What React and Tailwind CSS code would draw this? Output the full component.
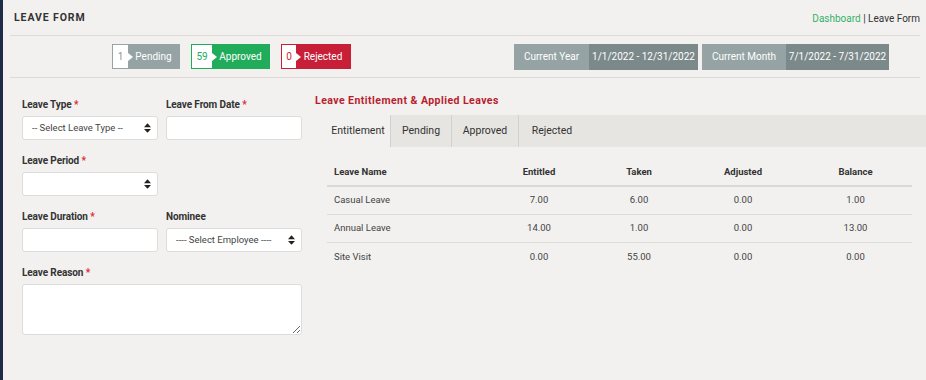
const STATUS = [
  { n: '1', label: 'Pending', bg: 'bg-[#96a3a5]', border: 'border-[#96a3a5]', num: 'text-[#8a9597]', w: 'w-[68px]', box: 'w-[15px]', tip: 15 },
  { n: '59', label: 'Approved', bg: 'bg-[#21ac5b]', border: 'border-[#21ac5b]', num: 'text-[#21ac5b]', w: 'w-[79px]', box: 'w-[20px]', tip: 20 },
  { n: '0', label: 'Rejected', bg: 'bg-[#c81f38]', border: 'border-[#c81f38]', num: 'text-[#c81f38]', w: 'w-[70px]', box: 'w-[14px]', tip: 14 },
]

const ROWS = [
  ['Casual Leave', '7.00', '6.00', '0.00', '1.00'],
  ['Annual Leave', '14.00', '1.00', '0.00', '13.00'],
  ['Site Visit', '0.00', '55.00', '0.00', '0.00'],
]

const COLS = 'grid grid-cols-[160px_104px_96px_112px_113px]'

function Arrows() {
  return (
    <svg width="7" height="10" viewBox="0 0 8 11" className="shrink-0">
      <path d="M4 0 L8 4.5 L0 4.5 Z M0 6.5 L8 6.5 L4 11 Z" fill="#222" />
    </svg>
  )
}

function Label({ children, req }) {
  return (
    <div className="text-[10px] font-bold text-[#333] leading-[14px] mb-[4px] tracking-[-0.1px]">
      {children}
      {req && <span className="text-[#e0262f]"> *</span>}
    </div>
  )
}

function Input() {
  return <div className="h-[24px] bg-white border border-[#dcdcdc] rounded-[3px]" />
}

function Select({ text }) {
  return (
    <div className="h-[24px] bg-white border border-[#dcdcdc] rounded-[3px] flex items-center justify-between pl-[9px] pr-[6px]">
      <span className="text-[9.5px] text-[#444] whitespace-nowrap">{text}</span>
      <Arrows />
    </div>
  )
}

function Badge({ s }) {
  return (
    <div className={`relative flex h-[25px] ${s.w} ${s.bg} border ${s.border}`}>
      <div className={`${s.box} bg-white flex items-center justify-center text-[10px] ${s.num}`}>{s.n}</div>
      <div
        className="absolute top-[8px] w-0 h-0 border-y-[4px] border-y-transparent border-l-[5px] border-l-white"
        style={{ left: s.tip }}
      />
      <div className="flex-1 flex items-center justify-center text-white text-[10px] whitespace-nowrap">{s.label}</div>
    </div>
  )
}

export default function App() {
  return (
    <div className="flex min-h-screen h-[380px] bg-[#f2f1ef] font-['Roboto','Liberation_Sans',sans-serif] overflow-hidden">
      <div className="w-[3px] bg-[#1f2c47] shrink-0" />
      <div className="flex-1">
        <div className="ml-[7px] w-[910px]">
          <div className="h-[36px] flex items-center justify-between border-b border-[#dcdbd8] pl-[4px] pt-[1px]">
            <div className="text-[10.5px] font-bold tracking-[0.9px] text-[#333]">LEAVE FORM</div>
            <div className="text-[10px] text-[#333]">
              <span className="text-[#34b26b]">Dashboard</span> | Leave Form
            </div>
          </div>
          <div className="h-[42px] flex items-center border-b border-[#dcdbd8]">
            <div className="ml-[102px] flex gap-[11px]">
              {STATUS.map((s) => <Badge key={s.label} s={s} />)}
            </div>
            <div className="flex-1" />
            <div className="mr-[31px] flex gap-[4px] text-white text-[10px] whitespace-nowrap">
              <div className="flex h-[26px]">
                <div className="w-[75px] bg-[#95a3a4] flex items-center justify-center">Current Year</div>
                <div className="w-[109px] bg-[#7b898a] flex items-center justify-center">1/1/2022 - 12/31/2022</div>
              </div>
              <div className="flex h-[26px]">
                <div className="w-[84px] bg-[#95a3a4] flex items-center justify-center">Current Month</div>
                <div className="w-[103px] bg-[#7b898a] flex items-center justify-center">7/1/2022 - 7/31/2022</div>
              </div>
            </div>
          </div>
        </div>

        <div className="flex">
          <div className="ml-[19px] w-[280px] pt-[20px]">
            <div className="grid grid-cols-[136px_136px] gap-x-[8px] gap-y-[14px]">
              <div>
                <Label req>Leave Type</Label>
                <Select text="-- Select Leave Type --" />
              </div>
              <div>
                <Label req>Leave From Date</Label>
                <Input />
              </div>
              <div>
                <Label req>Leave Period</Label>
                <Select text="" />
              </div>
              <div />
              <div>
                <Label req>Leave Duration</Label>
                <Input />
              </div>
              <div>
                <Label>Nominee</Label>
                <Select text="---- Select Employee ----" />
              </div>
              <div className="col-span-2">
                <Label req>Leave Reason</Label>
                <textarea className="block w-[280px] h-[51px] bg-white border border-[#dcdcdc] rounded-[3px] outline-none" />
              </div>
            </div>
          </div>

          <div className="ml-[13px] flex-1 pt-[16px]">
            <div className="text-[10.5px] font-bold tracking-[0.45px] text-[#b81d2e] leading-[14px]">
              Leave Entitlement &amp; Applied Leaves
            </div>
            <div className="ml-[11px] mt-[7px] h-[32px] bg-[#e7e5e2] flex text-[10.5px] text-[#333]">
              <div className="w-[64px] bg-[#f2f1ef] flex items-center justify-center">Entitlement</div>
              <div className="w-[61px] border-l border-[#d3d1ce] flex items-center justify-center">Pending</div>
              <div className="w-[67px] border-l border-[#d3d1ce] flex items-center justify-center">Approved</div>
              <div className="w-[67px] border-l border-[#d3d1ce] flex items-center justify-center">Rejected</div>
            </div>
            <div className="ml-[12px] mt-[12px] w-[585px] text-[9.5px] text-[#444]">
              <div className={`${COLS} h-[28px] items-center border-b-2 border-[#d9d8d5] font-bold text-[#333]`}>
                <div className="pl-[7px]">Leave Name</div>
                <div className="text-center">Entitled</div>
                <div className="text-center">Taken</div>
                <div className="text-center">Adjusted</div>
                <div className="text-center">Balance</div>
              </div>
              {ROWS.map((r, i) => (
                <div
                  key={r[0]}
                  className={`${COLS} h-[28px] items-center ${i < ROWS.length - 1 ? 'border-b border-[#dddcd9]' : ''}`}
                >
                  <div className="pl-[7px]">{r[0]}</div>
                  {r.slice(1).map((v, j) => (
                    <div key={j} className="text-center">{v}</div>
                  ))}
                </div>
              ))}
            </div>
          </div>
        </div>
      </div>
    </div>
  )
}
